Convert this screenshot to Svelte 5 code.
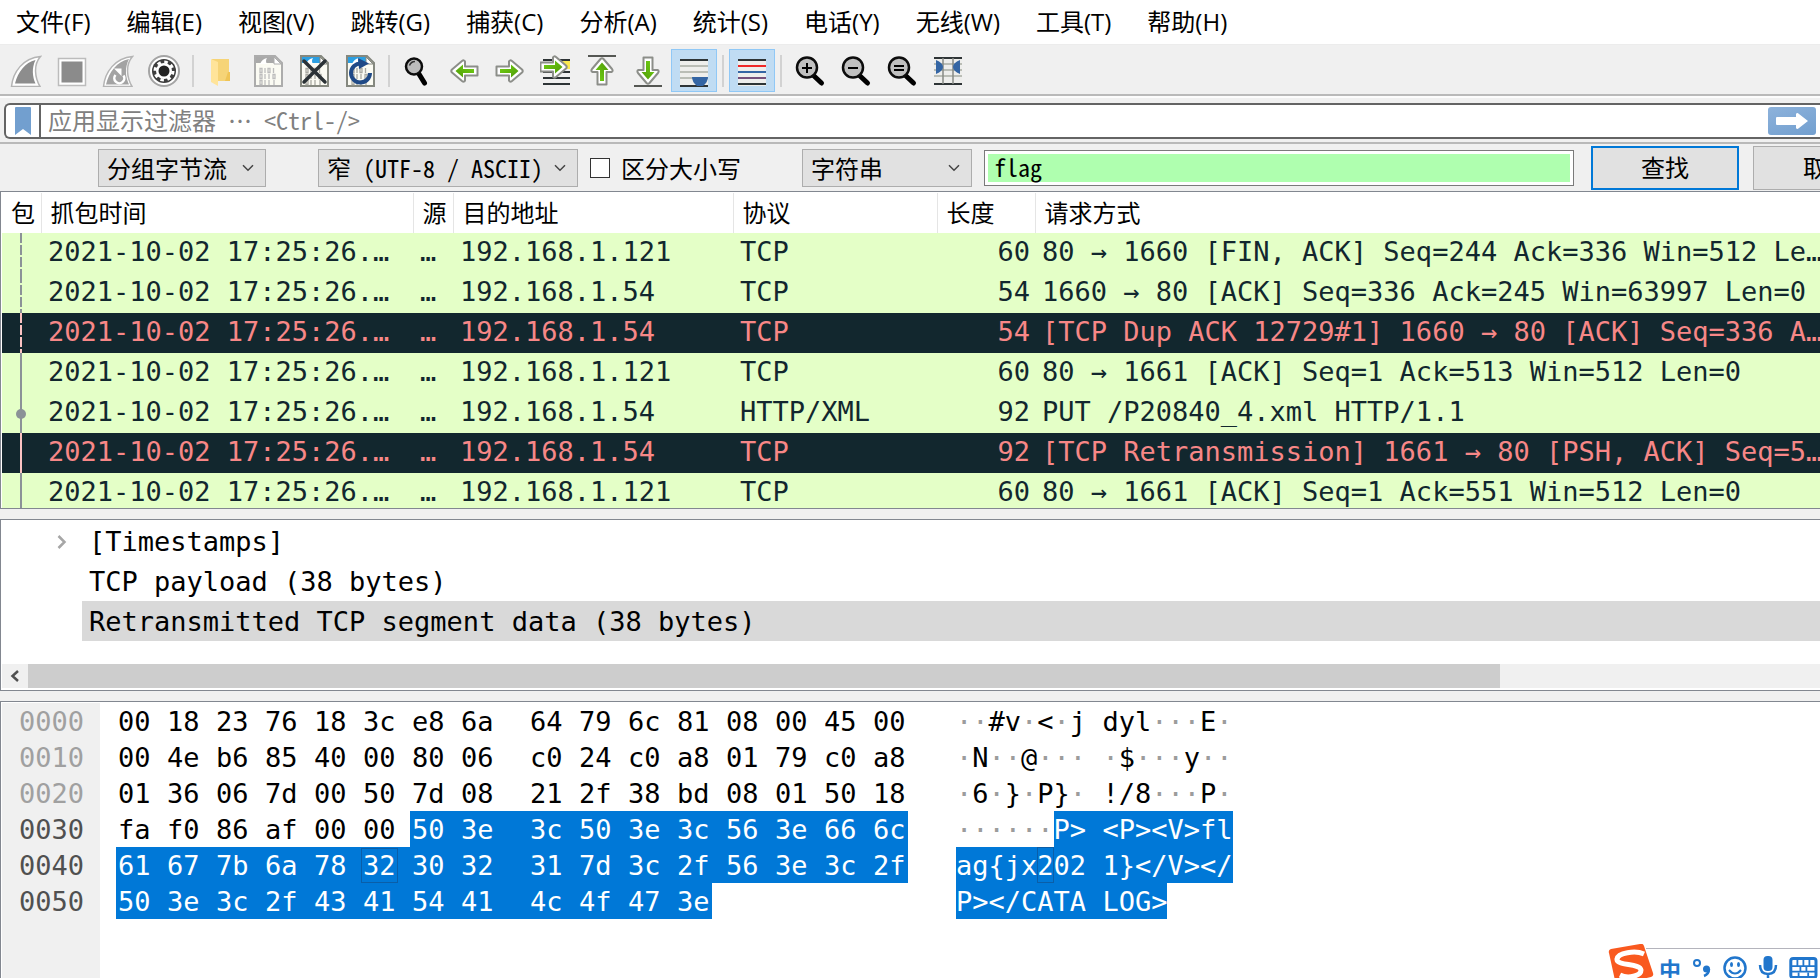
<script lang="ts">
  const MENUS = [
    '文件(F)',
    '编辑(E)',
    '视图(V)',
    '跳转(G)',
    '捕获(C)',
    '分析(A)',
    '统计(S)',
    '电话(Y)',
    '无线(W)',
    '工具(T)',
    '帮助(H)',
  ];

  // toolbar order; '|' is a separator
  const TOOLS = [
    'start', 'stop', 'restart', 'options', '|',
    'open', 'save', 'close', 'reload', '|',
    'find', 'back', 'forward', 'goto', 'first', 'last', 'autoscroll', '|',
    'colorize', '|',
    'zoom-in', 'zoom-out', 'zoom-reset', 'resize-columns',
  ];
  const CHECKED = ['autoscroll', 'colorize'];

  interface Packet {
    dst: string;
    proto: string;
    len: number;
    info: string;
    bad?: boolean;
    mark: 'dashed' | 'solid';
    dot?: boolean;
  }

  const TIME = '2021-10-02 17:25:26.…';

  const PACKETS: Packet[] = [
    { dst: '192.168.1.121', proto: 'TCP', len: 60, info: '80 → 1660 [FIN, ACK] Seq=244 Ack=336 Win=512 Le…', mark: 'dashed' },
    { dst: '192.168.1.54', proto: 'TCP', len: 54, info: '1660 → 80 [ACK] Seq=336 Ack=245 Win=63997 Len=0', mark: 'dashed' },
    { dst: '192.168.1.54', proto: 'TCP', len: 54, info: '[TCP Dup ACK 12729#1] 1660 → 80 [ACK] Seq=336 A…', mark: 'dashed', bad: true },
    { dst: '192.168.1.121', proto: 'TCP', len: 60, info: '80 → 1661 [ACK] Seq=1 Ack=513 Win=512 Len=0', mark: 'solid' },
    { dst: '192.168.1.54', proto: 'HTTP/XML', len: 92, info: 'PUT /P20840_4.xml HTTP/1.1', mark: 'solid', dot: true },
    { dst: '192.168.1.54', proto: 'TCP', len: 92, info: '[TCP Retransmission] 1661 → 80 [PSH, ACK] Seq=5…', mark: 'solid', bad: true },
    { dst: '192.168.1.121', proto: 'TCP', len: 60, info: '80 → 1661 [ACK] Seq=1 Ack=551 Win=512 Len=0', mark: 'solid' },
  ];

  const DUMP = [
    '00 18 23 76 18 3c e8 6a 64 79 6c 81 08 00 45 00',
    '00 4e b6 85 40 00 80 06 c0 24 c0 a8 01 79 c0 a8',
    '01 36 06 7d 00 50 7d 08 21 2f 38 bd 08 01 50 18',
    'fa f0 86 af 00 00 50 3e 3c 50 3e 3c 56 3e 66 6c',
    '61 67 7b 6a 78 32 30 32 31 7d 3c 2f 56 3e 3c 2f',
    '50 3e 3c 2f 43 41 54 41 4c 4f 47 3e',
  ];
  const SEL_START = 0x36;
  const HOVERED = 0x45;

  function toAscii(hex: string) {
    const code = parseInt(hex, 16);
    return code > 0x20 && code < 0x7f ? String.fromCharCode(code) : '·';
  }

  const rows = DUMP.map((line, r) => ({
    offset: (r * 16).toString(16).padStart(4, '0'),
    active: r * 16 + 15 >= SEL_START,
    bytes: line.split(' ').map((hex, i) => ({
      hex,
      char: toAscii(hex),
      selected: r * 16 + i >= SEL_START,
      hovered: r * 16 + i === HOVERED,
    })),
  }));

  let filter = $state('');
  let searchIn = $state('bytes');
  let charset = $state('narrow');
  let searchType = $state('string');
  let caseSensitive = $state(false);
  let needle = $state('flag');
</script>

{#snippet chevron()}
  <svg class="chevron" viewBox="0 0 12 8" aria-hidden="true"><path d="M1 1.2 6 6.2 11 1.2" fill="none" stroke="#444" stroke-width="1.5" /></svg>
{/snippet}

{#snippet arrow(transform: string)}
  <g {transform}>
    <path d="M2.5 11.5H15V6.5Q16 4.500 18 6L28 14.500Q29.500 16 28 17.500L18 26Q16 27.500 15 25.500V20.500H2.500Z" fill="#fff" stroke="#8c8e89" stroke-width="2" stroke-linejoin="round" />
    <path d="M6 14H17V9.500L24.500 16 17 22.500V18H6Z" fill="url(#green)" />
  </g>
{/snippet}

{#snippet sheet(edge: string, top: string, ink: string)}
  <path d="M3 1H23L30 8V31H3Z" fill="#fbfbf3" stroke={edge} stroke-width="2" />
  <path d="M4 2H22V8H4Z" fill={top} />
  <path d="M8 9Q10 4 15 3Q13 6 15 9Z" fill="#fff" />
  <path d="M22 2V9H29Z" fill="#fff" stroke={edge} />
  <g fill="none" stroke={ink} stroke-width="1.300">
    <path d="M8 13.500h2v4h-2zM16 13.500h2v4h-2zM8 19.500h2v4h-2zM21 19.500h2v4h-2zM8 25.500h2v4h-2z" />
    <path d="M13 13v5M21.500 13v5M13 19v5M17 19v5M13 25v5M17 25v5M22 25v5" />
  </g>
{/snippet}

{#snippet lens()}
  <path d="M19 20 27.500 28" stroke="#000" stroke-width="5" stroke-linecap="round" />
  <circle cx="13" cy="12.500" r="10" fill="#c0c0c0" stroke="#0c0c0c" stroke-width="2.500" />
{/snippet}

{#snippet icon(name: string)}
  <svg class="icon" viewBox="0 0 32 32" aria-hidden="true">
    {#if name === 'start'}
      <path d="M1.500 31.500C3 17 13 3 30.500 1.500C23 10 25 23 30 31.500Z" fill="#fff" stroke="#b4b4b4" stroke-width="1.500" />
      <path d="M5 28.500C8 17 15 7.500 25.500 5C21.500 13 22.500 22 25.500 28.500Z" fill="#8d8d8d" />
    {:else if name === 'stop'}
      <path d="M2.500 3.500H29.500V30.500H2.500Z" fill="#fff" stroke="#bcbcbc" stroke-width="1.500" />
      <path d="M5.500 6.500H26.500V27.500H5.500Z" fill="#8b8b8b" />
    {:else if name === 'restart'}
      <path d="M1.500 31.500C3 17 13 3 30.500 1.500C23 10 25 23 30 31.500Z" fill="#fff" stroke="#b4b4b4" stroke-width="1.500" />
      <path d="M4 29.500C7 17 15 6.500 27 4C22.500 13 23.500 22 27 29.500Z" fill="#a3a3a3" />
      <path d="M13.500 20A5 5 0 1 0 21.500 20.500" fill="none" stroke="#fff" stroke-width="2.500" />
      <path d="M12 13.500H19.500V21Z" fill="#fff" />
    {:else if name === 'options'}
      <circle cx="16" cy="16" r="15" fill="#fff" stroke="#a4a4a4" stroke-width="2" />
      <circle cx="16" cy="16" r="12" fill="#3e3e3e" />
      <circle cx="16" cy="16" r="8" fill="#fff" />
      <circle cx="16" cy="16" r="9" fill="none" stroke="#fff" stroke-width="3" stroke-dasharray="3.500 3.568" />
      <circle cx="16" cy="16" r="5.500" fill="#222" />
    {:else if name === 'open'}
      <path d="M6 4H23V26H6Z" fill="#f6d477" />
      <path d="M22 17H24V26H19Z" fill="#efc456" />
      <path d="M5 4 12 7V31L5 27Z" fill="#ffe49a" />
    {:else if name === 'save'}
      {@render sheet('#acacac', '#a9a9a9', '#bdbdbd')}
    {:else if name === 'close'}
      {@render sheet('#85887f', '#2c9fe2', '#a9a9a2')}
      <path d="M6 6 27 27M27 6 6 27" stroke="#2b3236" stroke-width="3.500" stroke-linecap="round" />
    {:else if name === 'reload'}
      {@render sheet('#85887f', '#2c9fe2', '#a9a9a2')}
      <path d="M17 8.500A9.500 9.500 0 1 0 26 18" fill="none" stroke="#204a87" stroke-width="4" />
      <path d="M14 3 25 8.500 15 14Z" fill="#204a87" />
    {:else if name === 'find'}
      <path d="M17 19 22.500 28" stroke="#000" stroke-width="5" stroke-linecap="round" />
      <circle cx="12" cy="11.500" r="8" fill="#bcbcbc" stroke="#0c0c0c" stroke-width="2.500" />
      <path d="M7.500 10.500Q9 6.500 13 6.500" fill="none" stroke="#333" stroke-width="1.500" />
    {:else if name === 'back'}
      {@render arrow('translate(32 0) scale(-1 1)')}
    {:else if name === 'forward'}
      {@render arrow('translate(0 0)')}
    {:else if name === 'goto'}
      <path d="M20 6H30V14H20Z" fill="#fce94f" />
      <path d="M3 5H30M3 17H30M3 23H30M3 29H30" stroke="#2e3436" stroke-width="2" />
      {@render arrow('translate(-2 -4)')}
    {:else if name === 'first'}
      <path d="M2 1H30" stroke="#555753" stroke-width="2" />
      {@render arrow('translate(0 32) rotate(-90)')}
    {:else if name === 'last'}
      <path d="M2 31H30" stroke="#555753" stroke-width="2" />
      {@render arrow('translate(32 0) rotate(90)')}
    {:else if name === 'autoscroll'}
      <path d="M2 5H30V31H2Z" fill="#eeeeec" />
      <path d="M2 11H30M2 17H30M2 23H30" stroke="#babdb6" stroke-width="2" />
      <path d="M2 5H30M2 31H30" stroke="#2e3436" stroke-width="2" />
      <path d="M14 22H30Q30 27 25 31H19Q14 27 14 22Z" fill="#3465a4" />
    {:else if name === 'colorize'}
      <path d="M2 5H30V31H2Z" fill="#eeeeec" />
      <path d="M2 5H30M2 29H30" stroke="#2e3436" stroke-width="2" />
      <path d="M2 11H30" stroke="#ef2929" stroke-width="2" />
      <path d="M2 17H30" stroke="#3465a4" stroke-width="2" />
      <path d="M2 23H30" stroke="#75507b" stroke-width="2" />
    {:else if name === 'zoom-in'}
      {@render lens()}
      <path d="M8 13H18M13 8V18" stroke="#000" stroke-width="2" />
    {:else if name === 'zoom-out'}
      {@render lens()}
      <path d="M8 13H18" stroke="#000" stroke-width="2" />
    {:else if name === 'zoom-reset'}
      {@render lens()}
      <path d="M8 11H18M8 15H18" stroke="#000" stroke-width="2" />
    {:else}
      <path d="M2 3H30V29H2Z" fill="#eeeeec" />
      <path d="M2 9H30M2 15H30M2 21H30" stroke="#babdb6" stroke-width="2" />
      <path d="M2 3H30M2 29H30" stroke="#2e3436" stroke-width="2" />
      <path d="M11 3V29M21 3V29" stroke="#888a85" stroke-width="1.500" />
      <path d="M4 5Q11 8 11 12Q11 16 4 19ZM28 5Q21 8 21 12Q21 16 28 19Z" fill="#3465a4" />
    {/if}
  </svg>
{/snippet}

<svg class="defs" aria-hidden="true">
  <defs>
    <linearGradient id="green" x1="0" y1="0" x2="1" y2="1">
      <stop offset="0" stop-color="#73d216" />
      <stop offset="1" stop-color="#4e9a06" />
    </linearGradient>
  </defs>
</svg>

<main class="app">
  <nav class="menubar" aria-label="Menu">
    {#each MENUS as label (label)}
      <button type="button">{label}</button>
    {/each}
  </nav>

  <div class="toolbar" role="toolbar" aria-label="Main toolbar">
    {#each TOOLS as tool, i (i)}
      {#if tool === '|'}
        <span class="sep"></span>
      {:else}
        <button type="button" class="tool" class:checked={CHECKED.includes(tool)} aria-label={tool}>
          {@render icon(tool)}
        </button>
      {/if}
    {/each}
  </div>

  <div class="filterbar">
    <div class="filterbox">
      <button type="button" class="bookmark" aria-label="Bookmark">
        <svg viewBox="0 0 16 28" aria-hidden="true"><path d="M0 1Q0 0 1 0H15Q16 0 16 1V28L8 22 0 28Z" fill="#729fcf" /></svg>
      </button>
      <input type="text" aria-label="Display filter" placeholder="应用显示过滤器 … <Ctrl-/>" bind:value={filter} />
      <button type="button" class="apply" aria-label="Apply">
        <svg viewBox="0 0 48 28" aria-hidden="true"><path d="M9 10H28V7Q29 5 31 7L40 14 31 21Q29 23 28 21V18H9Q8 18 8 17V11Q8 10 9 10Z" fill="#fff" /></svg>
      </button>
    </div>
  </div>

  <form class="findbar" onsubmit={(e) => e.preventDefault()}>
    <span class="combo in">
      <select aria-label="Search in" bind:value={searchIn}>
        <option value="bytes">分组字节流</option>
      </select>
      {@render chevron()}
    </span>
    <span class="combo charset">
      <select aria-label="Character width" bind:value={charset}>
        <option value="narrow">窄 (UTF-8 / ASCII)</option>
      </select>
      {@render chevron()}
    </span>
    <label class="case">
      <input type="checkbox" bind:checked={caseSensitive} />
      区分大小写
    </label>
    <span class="combo kind">
      <select aria-label="Search type" bind:value={searchType}>
        <option value="string">字符串</option>
      </select>
      {@render chevron()}
    </span>
    <input class="needle" type="text" aria-label="Search text" bind:value={needle} />
    <button type="submit" class="find default">查找</button>
    <button type="button" class="find cancel">取消</button>
  </form>

  <section class="packets">
    <table>
      <colgroup>
        <col class="c-no" /><col class="c-time" /><col class="c-src" /><col class="c-dst" />
        <col class="c-proto" /><col class="c-len" /><col />
      </colgroup>
      <thead>
        <tr>
          <th>包</th><th>抓包时间</th><th>源</th><th>目的地址</th><th>协议</th><th>长度</th><th>请求方式</th>
        </tr>
      </thead>
      <tbody>
        {#each PACKETS as p, i (i)}
          <tr class:bad={p.bad}>
            <td class="related"><span class="line {p.mark}">{#if p.dot}<i></i>{/if}</span></td>
            <td>{TIME}</td>
            <td>…</td>
            <td>{p.dst}</td>
            <td>{p.proto}</td>
            <td class="num">{p.len}</td>
            <td>{p.info}</td>
          </tr>
        {/each}
      </tbody>
    </table>
  </section>

  <section class="details">
    <ul>
      <li>
        <svg viewBox="0 0 10 14" aria-hidden="true"><path d="M1.500 1 7.500 7 1.500 13" fill="none" stroke="#a6a6a6" stroke-width="2.500" /></svg>
        <span>[Timestamps]</span>
      </li>
      <li><span>TCP payload (38 bytes)</span></li>
      <li class="current"><span>Retransmitted TCP segment data (38 bytes)</span></li>
    </ul>
    <div class="scrollbar">
      <button type="button" aria-label="Scroll left">
        <svg viewBox="0 0 10 12" aria-hidden="true"><path d="M8 1 2.500 6 8 11" fill="none" stroke="#505050" stroke-width="2.500" /></svg>
      </button>
      <div class="thumb"></div>
      <div class="track"></div>
    </div>
  </section>

  <section class="bytes">
    <div class="offsets">
      {#each rows as row (row.offset)}
        <div class:active={row.active}>{row.offset}</div>
      {/each}
    </div>
    <div class="hex">
      {#each rows as row (row.offset)}
        <div class="hexrow">
          {#each row.bytes as b, i (i)}
            <span class="byte" class:mid={i === 7} class:end={i === row.bytes.length - 1} class:sel={b.selected}><span class:hov={b.hovered}>{b.hex}</span></span>
          {/each}
        </div>
      {/each}
    </div>
    <div class="ascii">
      {#each rows as row (row.offset)}
        <div class="asciirow">
          {#each row.bytes as b, i (i)}<span class:sel={b.selected} class:dim={b.char === '·'} class:hov={b.hovered}>{b.char}</span>{#if i === 7}<span class:sel={b.selected}>{' '}</span>{/if}{/each}
        </div>
      {/each}
    </div>
  </section>

  <aside class="ime">
    <svg class="logo" viewBox="0 0 46 34" aria-hidden="true">
      <path d="M1 9Q0 6 3 5L32 0Q35 -1 36 2L45 29Q46 32 43 33L8 41Z" fill="#f9591f" />
      <path d="M36 10C27 6 10 9 9 15C8 22 32 19 33 26C33 32 20 35 12 31" fill="none" stroke="#fff" stroke-width="5" />
    </svg>
    <div class="strip">
      <span class="lang">中</span>
      <svg viewBox="0 0 20 24" aria-hidden="true">
        <circle cx="5" cy="7" r="3" fill="none" stroke="#2176cc" stroke-width="2" />
        <circle cx="14.500" cy="13" r="3.500" fill="#2176cc" />
        <path d="M17 13Q17 18 12 20" fill="none" stroke="#2176cc" stroke-width="2.500" />
      </svg>
      <svg viewBox="0 0 24 24" aria-hidden="true">
        <circle cx="12" cy="12" r="10.500" fill="none" stroke="#2176cc" stroke-width="2.500" />
        <path d="M6 14Q12 21 18 14" fill="none" stroke="#2176cc" stroke-width="2" />
        <ellipse cx="8.500" cy="8.500" rx="1.500" ry="2.500" fill="#2176cc" />
        <ellipse cx="15.500" cy="8.500" rx="1.500" ry="2.500" fill="#2176cc" />
      </svg>
      <svg viewBox="0 0 20 24" aria-hidden="true">
        <rect x="5.500" y="0" width="9" height="15" rx="4" fill="#2176cc" />
        <path d="M2 9Q2 18 10 18Q18 18 18 9M10 18V24" fill="none" stroke="#2176cc" stroke-width="2.500" />
      </svg>
      <svg viewBox="0 0 24 20" aria-hidden="true">
        <rect x="1.500" y="2" width="21" height="16" rx="2" fill="none" stroke="#2176cc" stroke-width="2.500" />
        <path d="M2 8.500H22M2 13H22M8 14V18M16 14V18M7 3V8M12 3V8M17 3V8M9.500 8V13M14.500 8V13" stroke="#2176cc" stroke-width="1.500" />
      </svg>
    </div>
  </aside>
</main>

<style>
  :global(body) {
    margin: 0;
    background: #f0f0f0;
  }
  .app {
    --cjk: 'Noto Sans Mono CJK SC', 'Noto Sans CJK SC', sans-serif;
    --mono: 'DejaVu Sans Mono', monospace;
    --edge: #828790;
    box-sizing: border-box;
    position: relative;
    display: flex;
    flex-direction: column;
    min-height: 100vh;
    overflow: hidden;
    background: #f0f0f0;
    color: #000;
    font: 300 24px/36px var(--cjk);
  }
  button,
  select,
  input {
    box-sizing: border-box;
    margin: 0;
    padding: 0;
    border: 0;
    border-radius: 0;
    background: none;
    color: inherit;
    font: inherit;
  }
  svg {
    display: block;
  }
  .defs {
    position: absolute;
    width: 0;
    height: 0;
  }

  .menubar {
    display: flex;
    gap: 36px;
    height: 44px;
    padding-left: 16px;
    background: #fff;
    border-bottom: 1px solid #ececec;
    font: 400 24px/44px 'Open Sans', 'Noto Sans CJK SC', sans-serif;
    white-space: nowrap;
  }

  .toolbar {
    display: flex;
    align-items: center;
    height: 47px;
    padding: 2px 0 0 3px;
    border-bottom: 2px solid #b9b9b9;
  }
  .tool {
    display: grid;
    place-items: center;
    width: 46px;
    height: 43px;
    flex: none;
  }
  .tool.checked {
    background: #c0dcf3;
    border: 1px solid #90c8f6;
  }
  .icon {
    width: 32px;
    height: 32px;
  }
  .sep {
    width: 2px;
    height: 32px;
    margin: 0 5px;
    background: #d2d2d2;
  }

  .filterbar {
    padding: 5px 0 3px 4px;
    border-top: 2px solid #fcfcfc;
    border-bottom: 2px solid #b9b9b9;
  }
  .filterbox {
    display: flex;
    align-items: center;
    height: 36px;
    box-sizing: border-box;
    padding-right: 4px;
    border: 2px solid #646464;
    border-right: 0;
    border-radius: 6px 0 0 6px;
    background: #fff;
  }
  .bookmark {
    display: grid;
    place-items: center;
    width: 35px;
    height: 32px;
    border-right: 2px solid #646464;
  }
  .bookmark svg {
    width: 16px;
    height: 28px;
  }
  .filterbox input {
    flex: 1;
    height: 32px;
    padding: 0 0 2px 7px;
    outline: none;
  }
  .filterbox input::placeholder {
    color: #808080;
    opacity: 1;
  }
  .apply {
    width: 48px;
    height: 28px;
    border-radius: 3px;
    background: linear-gradient(160deg, #8db2db, #729fcf);
  }
  .apply svg {
    width: 48px;
    height: 28px;
  }

  .findbar {
    display: flex;
    align-items: center;
    height: 47px;
    padding-left: 98px;
    margin-right: -81px;
  }
  .combo {
    position: relative;
    flex: none;
  }
  .combo select {
    width: 100%;
    height: 38px;
    padding: 0 0 2px 8px;
    border: 1px solid #adadad;
    background: #e1e1e1;
    appearance: none;
  }
  .chevron {
    position: absolute;
    right: 12px;
    top: 15px;
    width: 12px;
    height: 8px;
    pointer-events: none;
  }
  .combo.in {
    width: 168px;
  }
  .combo.charset {
    width: 260px;
    margin-left: 52px;
  }
  .combo.kind {
    width: 170px;
  }
  .case {
    display: flex;
    align-items: center;
    gap: 11px;
    width: 212px;
    margin-left: 12px;
    flex: none;
  }
  .case input {
    width: 20px;
    height: 20px;
    border: 1px solid #333;
    background: #fff;
    appearance: none;
  }
  .case input:checked {
    background: #0078d7;
  }
  .needle {
    flex: 1;
    min-width: 0;
    height: 36px;
    margin: 0 17px 0 12px;
    padding: 0 0 2px 9px;
    border: 1px solid #7a7a7a;
    background: #afffaf;
    box-shadow: inset 0 0 0 3px #fff;
    outline: none;
  }
  .find {
    width: 148px;
    height: 44px;
    flex: none;
    padding-bottom: 2px;
    border: 1px solid #adadad;
    background: #e1e1e1;
  }
  .find.default {
    border: 2px solid #0078d7;
  }
  .find.cancel {
    margin-left: 14px;
  }

  .packets {
    height: 314px;
    padding: 1px 0 1px 1px;
    border: 1px solid var(--edge);
    border-right: 0;
    background: #fff;
    overflow: hidden;
  }
  table {
    width: 100%;
    border-collapse: collapse;
    table-layout: fixed;
  }
  .c-no {
    width: 39px;
  }
  .c-src {
    width: 40px;
  }
  .c-time {
    width: 372px;
  }
  .c-dst {
    width: 280px;
  }
  .c-proto {
    width: 204px;
  }
  .c-len {
    width: 98px;
  }
  th {
    height: 40px;
    padding: 0 0 2px 9px;
    box-sizing: border-box;
    border-right: 1px solid #e5e5e5;
    font-weight: 300;
    text-align: left;
    white-space: nowrap;
  }
  th:last-child {
    border-right: 0;
  }
  tbody {
    font: 400 27px/38px var(--mono);
  }
  tbody tr {
    background: #e4ffc7;
    color: #12272e;
  }
  tbody tr.bad {
    background: #12272e;
    color: #f78787;
  }
  td {
    height: 40px;
    padding: 0 0 0 7px;
    vertical-align: top;
    white-space: nowrap;
    overflow: hidden;
  }
  td.related {
    padding: 0 0 0 18px;
  }
  td.num {
    padding: 0 5px 0 0;
    text-align: right;
  }
  .line {
    position: relative;
    display: block;
    width: 2px;
    height: 40px;
    color: #8b9297;
    background: currentColor;
  }
  .line.dashed {
    background: repeating-linear-gradient(currentColor 0 10px, transparent 10px 12px);
  }
  .bad .line {
    color: #fbc3c3;
  }
  .line i {
    position: absolute;
    left: -4px;
    top: 16px;
    width: 10px;
    height: 10px;
    border-radius: 50%;
    background: #8b9297;
  }

  .details {
    margin-top: 10px;
    padding: 1px 0 2px 1px;
    border: 1px solid var(--edge);
    border-right: 0;
    background: #fff;
    font: 400 27px/38px var(--mono);
  }
  .details ul {
    margin: 0 0 23px;
    padding: 0;
    list-style: none;
  }
  .details li {
    display: flex;
    align-items: center;
    box-sizing: border-box;
    height: 40px;
    margin-left: 80px;
    padding: 2px 0 0 7px;
  }
  .details li svg {
    width: 10px;
    height: 14px;
    margin: 0 22px 0 -32px;
  }
  .details li.current {
    background: #d9d9d9;
  }
  .scrollbar {
    display: flex;
    height: 24px;
    background: #f0f0f0;
  }
  .scrollbar button {
    display: grid;
    place-items: center;
    width: 26px;
  }
  .scrollbar button svg {
    width: 10px;
    height: 12px;
  }
  .thumb {
    flex: 23;
    background: #cdcdcd;
  }
  .track {
    flex: 5;
  }

  .bytes {
    display: flex;
    flex: 1;
    margin-top: 10px;
    padding: 1px 0 0 1px;
    border: 1px solid var(--edge);
    border-width: 1px 0 0 1px;
    background: #fff;
    font: 400 27px/38px var(--mono);
  }
  .offsets {
    width: 81px;
    padding-left: 17px;
    background: #f0f0f0;
    color: #a0a0a0;
  }
  .offsets div {
    height: 36px;
  }
  .offsets .active {
    color: #505050;
  }
  .hex {
    width: 840px;
    padding-left: 16px;
  }
  .hexrow {
    display: flex;
    height: 36px;
  }
  .byte {
    box-sizing: border-box;
    width: 49px;
    padding-left: 2px;
  }
  .byte.mid {
    width: 69px;
  }
  .byte.end {
    width: 37px;
  }
  .asciirow {
    height: 36px;
    white-space: pre;
  }
  .asciirow span {
    display: inline-block;
    height: 36px;
    vertical-align: top;
  }
  .dim {
    color: #9c9c9c;
  }
  .sel {
    background: #0078d7;
    color: #fff;
  }
  .hov {
    outline: 1px solid #0a5ea8;
    outline-offset: -1px;
  }
  .byte .hov {
    outline-offset: 1px;
  }

  .ime {
    position: absolute;
    right: 0;
    bottom: 0;
    display: flex;
    align-items: flex-end;
  }
  .logo {
    width: 46px;
    height: 34px;
    margin-right: -8px;
    z-index: 1;
  }
  .strip {
    display: flex;
    align-items: center;
    justify-content: space-between;
    box-sizing: border-box;
    width: 174px;
    height: 30px;
    padding: 8px 2px 0 13px;
    border-top: 1px solid #b4b4bc;
    background: #fff;
  }
  .strip svg {
    height: 24px;
  }
  .lang {
    color: #2176cc;
    font: 700 22px/24px 'Noto Sans CJK SC', sans-serif;
  }
</style>
